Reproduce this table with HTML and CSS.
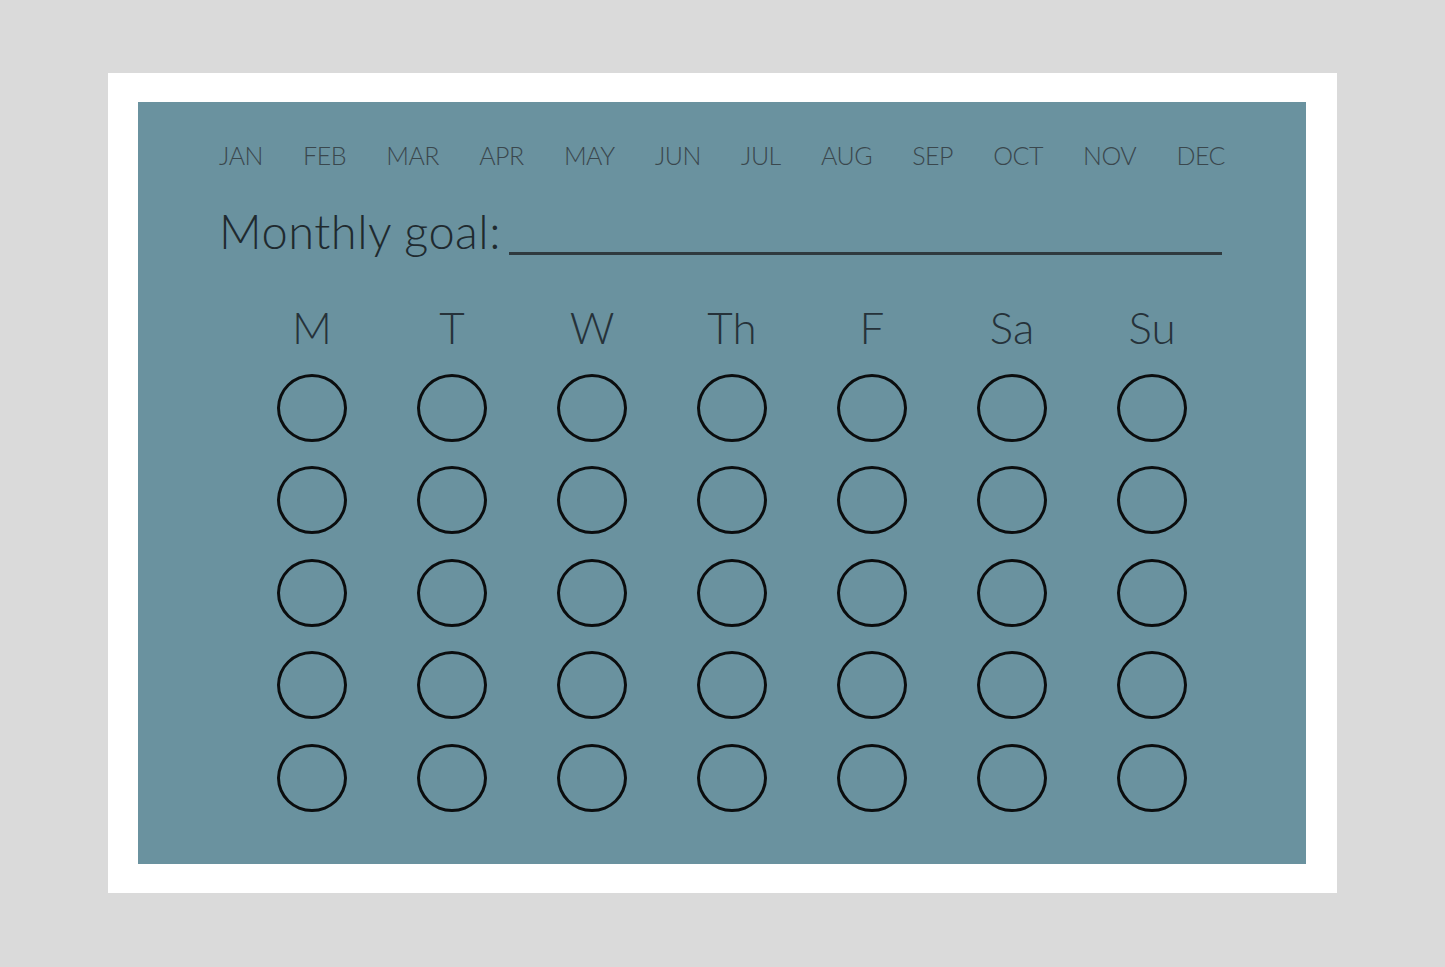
FILE: index.html
```html
<!DOCTYPE html>
<html>
<head>
<meta charset="utf-8">
<link rel="stylesheet" href="styles.css">
</head>
<body>
<div class="card">
  <div class="panel">
    <div class="months">
      <span>JAN</span><span>FEB</span><span>MAR</span><span>APR</span><span>MAY</span><span>JUN</span><span>JUL</span><span>AUG</span><span>SEP</span><span>OCT</span><span>NOV</span><span>DEC</span>
    </div>
    <div class="goal">
      <span class="goal-label">Monthly goal:</span>
      <span class="goal-line"></span>
    </div>
    <div class="grid">
      <div class="day">M</div><div class="day">T</div><div class="day">W</div><div class="day">Th</div><div class="day">F</div><div class="day">Sa</div><div class="day">Su</div>
      <div class="dot"></div><div class="dot"></div><div class="dot"></div><div class="dot"></div><div class="dot"></div><div class="dot"></div><div class="dot"></div>
      <div class="dot"></div><div class="dot"></div><div class="dot"></div><div class="dot"></div><div class="dot"></div><div class="dot"></div><div class="dot"></div>
      <div class="dot"></div><div class="dot"></div><div class="dot"></div><div class="dot"></div><div class="dot"></div><div class="dot"></div><div class="dot"></div>
      <div class="dot"></div><div class="dot"></div><div class="dot"></div><div class="dot"></div><div class="dot"></div><div class="dot"></div><div class="dot"></div>
      <div class="dot"></div><div class="dot"></div><div class="dot"></div><div class="dot"></div><div class="dot"></div><div class="dot"></div><div class="dot"></div>
    </div>
  </div>
</div>
</body>
</html>
```
FILE: styles.css
```css
html, body {
  margin: 0;
  padding: 0;
  background: #dadada;
}
body {
  padding: 73px 0 0 108px;
  font-family: "Lato", "Liberation Sans", sans-serif;
}
.card {
  width: 1229px;
  height: 820px;
  box-sizing: border-box;
  background: #ffffff;
  padding: 29px 31px 29px 30px;
}
.panel {
  width: 1168px;
  height: 762px;
  background: #6a929f;
  box-sizing: border-box;
  padding: 38px 81px 0 81px;
}
.months {
  display: flex;
  justify-content: space-between;
  font-size: 25px;
  font-weight: 300;
  line-height: 30px;
  color: #3a474d;
  letter-spacing: -0.5px;
}
.goal {
  display: flex;
  align-items: flex-end;
  margin-top: 33px;
}
.goal-label {
  font-size: 47px;
  font-weight: 300;
  line-height: 56px;
  color: #1f2a2f;
  letter-spacing: 0.5px;
}
.goal-line {
  flex: 1;
  height: 3px;
  background: #2f3a3f;
  margin: 0 3px 4px 8px;
}
.grid {
  display: grid;
  grid-template-columns: repeat(7, 140px);
  grid-template-rows: 40px repeat(5, 68px);
  row-gap: 24.5px;
  margin: 50px 0 0 23px;
  justify-items: center;
}
.day {
  font-size: 44px;
  font-weight: 300;
  line-height: 52px;
  height: 40px;
  color: #26323a;
  margin-top: -8.5px;
}
.dot {
  width: 70px;
  height: 68px;
  box-sizing: border-box;
  border: 3px solid #0b0d0e;
  border-radius: 50%;
}
```
